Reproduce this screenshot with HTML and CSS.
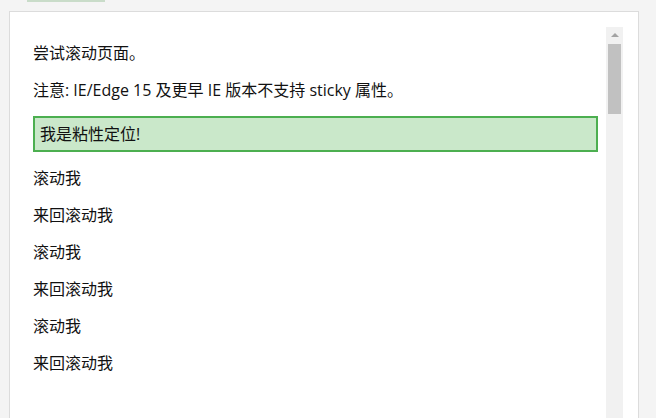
FILE: index.html
```html
<!DOCTYPE html>
<html lang="zh-CN">
<head>
<meta charset="utf-8">
<title>sticky</title>
<link rel="stylesheet" href="styles.css">
</head>
<body>
<div class="page">
  <div class="topbar"><span class="tab-edge"></span></div>
  <div class="panel">
    <div class="frame">
      <div class="viewport">
        <div class="doc">
          <p>尝试滚动页面。</p>
          <p>注意: IE/Edge 15 及更早 IE 版本不支持 sticky 属性。</p>
          <div class="sticky">我是粘性定位!</div>
          <div class="rest">
            <p>滚动我</p>
            <p>来回滚动我</p>
            <p>滚动我</p>
            <p>来回滚动我</p>
            <p>滚动我</p>
            <p>来回滚动我</p>
          </div>
        </div>
      </div>
      <div class="scrollbar">
        <div class="sb-button"><span class="sb-arrow"></span></div>
        <div class="sb-thumb"></div>
      </div>
    </div>
  </div>
</div>
</body>
</html>
```

FILE: styles.css
```css
html, body {
  margin: 0;
  padding: 0;
  height: 100%;
}
body {
  background: #f4f4f4;
  overflow: hidden;
  font-family: "Open Sans", "Noto Sans CJK SC", sans-serif;
}
.page {
  height: 100%;
  display: flex;
  flex-direction: column;
  padding: 0 17px 0 9px;
  box-sizing: border-box;
}
.topbar {
  height: 11px;
  flex: none;
  display: flex;
  align-items: flex-start;
  padding-left: 18px;
}
.tab-edge {
  width: 78px;
  height: 2px;
  background: #c9dcc9;
}
.panel {
  flex: 1;
  background: #fff;
  border: 1px solid #dcdcdc;
  border-bottom: none;
  padding: 15px 15px 0 15px;
  display: flex;
  min-height: 0;
}
.frame {
  flex: 1;
  display: flex;
  min-height: 0;
}
.viewport {
  flex: 1;
  overflow: hidden;
  background: #fff;
}
.doc {
  padding: 0 8px;
  font-size: 16px;
  line-height: 22px;
  color: #111;
  display: flow-root;
}
.doc p {
  margin: 15px 0;
}
.sticky {
  padding: 5px;
  background: #cae8ca;
  border: 2px solid #4caf50;
}
.rest {
  padding-bottom: 2000px;
}
.scrollbar {
  width: 17px;
  flex: none;
  background: #f1f1f1;
  display: flex;
  flex-direction: column;
  align-items: center;
}
.sb-button {
  height: 17px;
  width: 17px;
  display: flex;
  align-items: center;
  justify-content: center;
}
.sb-arrow {
  width: 0;
  height: 0;
  border-left: 4px solid transparent;
  border-right: 4px solid transparent;
  border-bottom: 4px solid #a3a3a3;
  margin-top: -1px;
}
.sb-thumb {
  width: 13px;
  height: 70px;
  background: #c1c1c1;
}
```
